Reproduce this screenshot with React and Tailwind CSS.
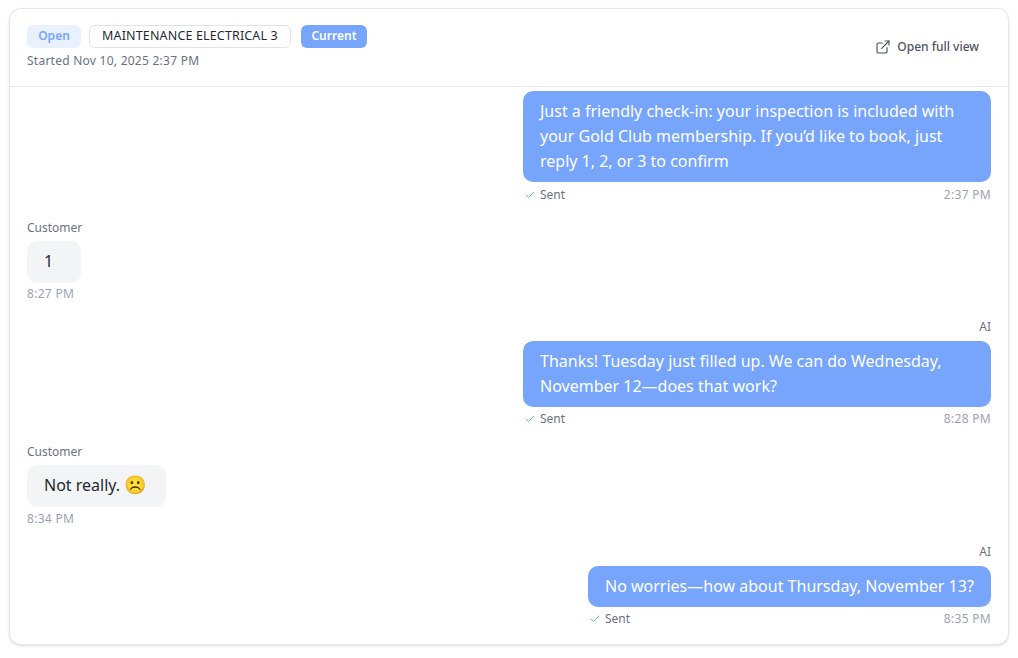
import { Check, ExternalLink } from 'lucide-react';

const messages = [
  {
    id: 1,
    from: 'ai',
    width: 'w-[468px]',
    footerMt: 'mt-[5px]',
    text: 'Just a friendly check-in: your inspection is included with your Gold Club membership. If you’d like to book, just reply 1, 2, or 3 to confirm',
    time: '2:37 PM',
    hideLabel: true,
  },
  { id: 2, from: 'customer', timeMt: 'mt-[3px]', text: '1', time: '8:27 PM' },
  {
    id: 3,
    from: 'ai',
    width: 'w-[468px]',
    footerMt: 'mt-1',
    text: 'Thanks! Tuesday just filled up. We can do Wednesday, November 12—does that work?',
    time: '8:28 PM',
  },
  {
    id: 4,
    from: 'customer',
    timeMt: 'mt-1',
    text: (
      <>
        Not really. <span className="inline-block w-[25px] text-[18px] leading-[25px] align-top">☹️</span>
      </>
    ),
    time: '8:34 PM',
  },
  { id: 5, from: 'ai', width: 'w-[403px]', footerMt: 'mt-1', text: 'No worries—how about Thursday, November 13?', time: '8:35 PM' },
];

function AiMessage({ m }) {
  return (
    <div className="flex flex-col items-end">
      {!m.hideLabel && <div className="h-4 mb-1.5 text-xs leading-4 text-[#6b7280]">AI</div>}
      <div className={`${m.width} bg-[#76a5fb] text-white rounded-[10px] pl-[17px] pr-4 py-2 text-base leading-[25px]`}>{m.text}</div>
      <div className={`${m.width} ${m.footerMt} flex items-center justify-between text-xs leading-4`}>
        <span className="flex items-center gap-1 pl-px text-[#6b7280]">
          <Check className="w-3 h-3 text-[#4ade80]" strokeWidth={2} />
          Sent
        </span>
        <span className="text-[#9ca3af] tracking-[0.3px]">{m.time}</span>
      </div>
    </div>
  );
}

function CustomerMessage({ m }) {
  return (
    <div className="flex flex-col items-start">
      <div className="h-4 mb-[5px] text-xs leading-4 text-[#6b7280]">Customer</div>
      <div className="min-w-[54px] bg-[#f3f4f6] text-[#1f2937] rounded-[10px] px-[17px] pt-[7px] pb-[9px] text-base leading-[26px]">{m.text}</div>
      <div className={`${m.timeMt} text-xs leading-4 text-[#9ca3af] tracking-[0.3px]`}>{m.time}</div>
    </div>
  );
}

export default function App() {
  return (
    <div className="min-h-screen bg-white pl-[9px] pr-[9px] pt-2 pb-3 font-['Noto_Sans','Open_Sans',sans-serif]">
      <div className="h-[637px] flex flex-col bg-white border border-[#e5e7eb] rounded-xl shadow-sm overflow-hidden">

        {/* HEADER */}
        <div className="h-[78px] shrink-0 border-b border-[#e5e7eb] pl-[17px] pr-[29px] pt-4 flex justify-between">
          <div>
            <div className="flex items-center">
              <span className="w-[54px] h-[23px] pb-px flex items-center justify-center rounded-md bg-[#eaf1fe] text-[#76a5fb] text-xs font-semibold">Open</span>
              <span className="w-[202px] h-[23px] ml-2 pb-px flex items-center justify-center rounded-md bg-white border border-[#e0e3e8] text-[#1f2937] text-[12.5px] tracking-[0.15px]">MAINTENANCE ELECTRICAL 3</span>
              <span className="w-[66px] h-[23px] ml-2.5 pb-px flex items-center justify-center rounded-md bg-[#76a5fb] text-white text-xs font-semibold">Current</span>
            </div>
            <div className="mt-[5px] text-xs leading-4 text-[#6b7280] tracking-[0.25px]">Started Nov 10, 2025 2:37 PM</div>
          </div>
          <div className="h-[30px] mt-[7px] flex items-center gap-1.5 text-xs font-medium text-[#4b5563]">
            <ExternalLink className="w-4 h-4" strokeWidth={1.75} />
            Open full view
          </div>
        </div>

        {/* MENSAJES */}
        <div className="flex-1 pl-[17px] pr-[17px] pt-1 flex flex-col gap-[17px]">
          {messages.map((m) =>
            m.from === 'ai' ? <AiMessage key={m.id} m={m} /> : <CustomerMessage key={m.id} m={m} />
          )}
        </div>
      </div>
    </div>
  );
}
